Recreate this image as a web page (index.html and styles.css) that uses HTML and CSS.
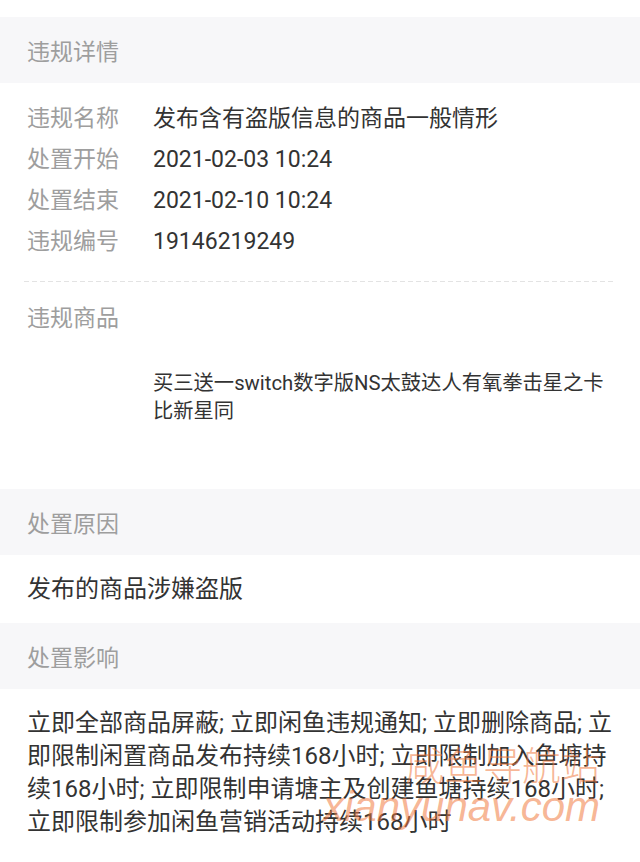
FILE: index.html
```html
<!DOCTYPE html>
<html lang="zh-cn">

<head>
    <meta charset="UTF-8">
    <meta name="viewport" content="width=device-width, initial-scale=1.0">
    <title>违规详情</title>
    <link rel="stylesheet" href="styles.css">
</head>

<body>
    <div class="page">
        <div class="section-title">违规详情</div>

        <div class="detail">
            <div class="row"><span class="label">违规名称</span><span class="value">发布含有盗版信息的商品一般情形</span></div>
            <div class="row"><span class="label">处置开始</span><span class="value">2021-02-03 10:24</span></div>
            <div class="row"><span class="label">处置结束</span><span class="value">2021-02-10 10:24</span></div>
            <div class="row"><span class="label">违规编号</span><span class="value">19146219249</span></div>
        </div>

        <div class="dash-line"></div>

        <div class="goods">
            <div class="label">违规商品</div>
            <div class="goods-item">
                <div class="goods-thumb"></div>
                <div class="goods-name">买三送一switch数字版NS太鼓达人有氧拳击星之卡比新星同</div>
            </div>
        </div>

        <div class="section-title">处置原因</div>
        <div class="text-block">发布的商品涉嫌盗版</div>

        <div class="section-title">处置影响</div>
        <div class="text-block long">立即全部商品屏蔽; 立即闲鱼违规通知; 立即删除商品; 立即限制闲置商品发布持续168小时; 立即限制加入鱼塘持续168小时; 立即限制申请塘主及创建鱼塘持续168小时; 立即限制参加闲鱼营销活动持续168小时</div>

        <!-- 水印 -->
        <div class="watermark">
            <div class="wm-cn">咸鱼导航站</div>
            <div class="wm-en">xianyunav.com</div>
        </div>
    </div>
</body>

</html>
```

FILE: styles.css
```css
* {
    box-sizing: border-box;
}

body {
    margin: 0;
    background-color: #fff;
    font-family: Roboto, "Noto Sans CJK SC", sans-serif;
}

.page {
    position: relative;
    width: 640px;
    height: 862px;
    padding-top: 17px;
    overflow: hidden;
}

/* 灰色分组标题 */
.section-title {
    height: 66px;
    padding: 6px 0 0 27px;
    line-height: 60px;
    font-size: 23px;
    color: #9e9e9e;
    background-color: #f7f7f9;
}

.label {
    font-size: 23px;
    color: #9e9e9e;
}

.value {
    font-size: 23px;
    color: #333;
}

/* 违规详情 */
.detail {
    padding: 14.5px 25px 0 27px;
}

.row {
    display: grid;
    grid-template-columns: 126px 1fr;
    line-height: 41px;
}

.dash-line {
    height: 1px;
    margin: 19.5px 25px 0 24px;
    background: repeating-linear-gradient(to right, #e3e3e3 0 5px, transparent 5px 8px);
}

/* 违规商品 */
.goods {
    padding: 15.5px 25px 64px 27px;
}

.goods .label {
    display: block;
    line-height: 41px;
}

.goods-item {
    display: grid;
    grid-template-columns: 126px 1fr;
    margin-top: 30.5px;
}

.goods-name {
    font-size: 20.3px;
    line-height: 28px;
    color: #333;
}

/* 文本块 */
.text-block {
    padding: 18px 25px 17px 27px;
    font-size: 24px;
    line-height: 33px;
    color: #333;
}

.text-block.long {
    padding-bottom: 20px;
}

.watermark {
    position: absolute;
    left: 323px;
    top: 745px;
    color: rgba(240, 120, 60, 0.55);
    pointer-events: none;
}

.wm-cn {
    padding-left: 82px;
    font-size: 39px;
    line-height: 44px;
    font-weight: 300;
}

.wm-en {
    margin-top: -7px;
    font-family: "Liberation Sans", sans-serif;
    font-size: 42px;
    line-height: 50px;
    font-style: italic;
}
```
